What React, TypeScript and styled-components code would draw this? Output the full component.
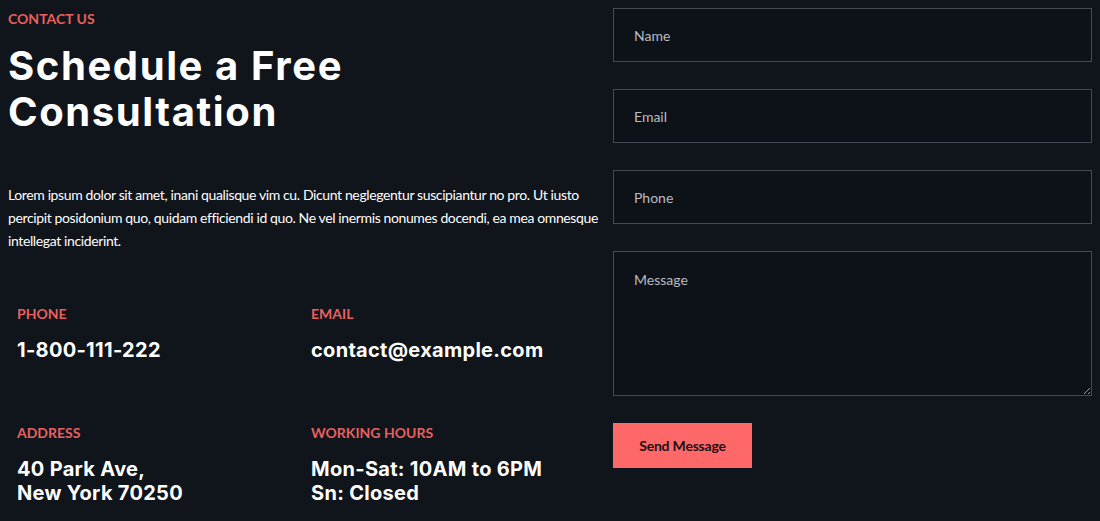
import React from "react";
import styled, { createGlobalStyle } from "styled-components";

const Global = createGlobalStyle`
  html, body { background: #10141b; }
  body { margin: 8px; font-family: Lato, "Open Sans", sans-serif; color: #ffffff; }
  * { box-sizing: border-box; }
`;

const Page = styled.div`
  display: grid;
  grid-template-columns: 595px 479px;
  column-gap: 10px;
  align-items: start;
`;

const Left = styled.section`
  display: flex;
  flex-direction: column;
`;

const Eyebrow = styled.div`
  font-family: Lato, sans-serif;
  font-weight: 700;
  font-size: 14px;
  line-height: 22px;
  color: #e8605f;
  text-transform: uppercase;
`;

const Heading = styled.h1`
  margin: 13px 0 0;
  font-family: Inter, "Open Sans", sans-serif;
  font-weight: 700;
  font-size: 40px;
  line-height: 46px;
  letter-spacing: 1.6px;
  color: #ffffff;
`;

const Lead = styled.p`
  margin: 48px 0 0;
  font-family: Lato, sans-serif;
  font-size: 14px;
  line-height: 23px;
  letter-spacing: -0.38px;
  color: #ffffff;
`;

const InfoGrid = styled.div`
  display: grid;
  grid-template-columns: 294px 294px;
  row-gap: 61px;
  padding-left: 9px;
  margin-top: 52px;
`;

const InfoItem = styled.div`
  display: flex;
  flex-direction: column;
  gap: 14px;
`;

const InfoLabel = styled.div`
  font-family: Lato, sans-serif;
  font-weight: 700;
  font-size: 14px;
  line-height: 20px;
  color: #e8605f;
  text-transform: uppercase;
`;

const InfoValue = styled.div`
  font-family: Inter, "Open Sans", sans-serif;
  font-weight: 700;
  font-size: 20px;
  line-height: 24px;
  letter-spacing: 0.3px;
  color: #ffffff;
`;

const Form = styled.form`
  display: flex;
  flex-direction: column;
  gap: 27px;
`;

const fieldBase = `
  width: 100%;
  background: #0d1118;
  border: 1px solid #454b55;
  color: #ffffff;
  font-family: Lato, sans-serif;
  font-size: 14px;
  padding: 0 20px;
  outline: none;
  &::placeholder { color: #b9bdc3; opacity: 1; }
`;

const Input = styled.input`
  ${fieldBase}
  height: 54px;
`;

const TextArea = styled.textarea`
  ${fieldBase}
  height: 145px;
  padding-top: 19px;
  line-height: 18px;
  resize: vertical;
  display: block;
`;

const SendButton = styled.button`
  align-self: flex-start;
  width: 139px;
  height: 45px;
  background: #ff6868;
  border: none;
  color: #1d1115;
  font-family: Lato, sans-serif;
  font-weight: 700;
  font-size: 14px;
  letter-spacing: -0.2px;
  cursor: pointer;
`;

const info = [
  { label: "Phone", value: ["1-800-111-222"] },
  { label: "Email", value: ["contact@example.com"] },
  { label: "Address", value: ["40 Park Ave,", "New York 70250"] },
  { label: "Working Hours", value: ["Mon-Sat: 10AM to 6PM", "Sn: Closed"] },
];

export default function App() {
  return (
    <>
      <Global />
      <Page>
        <Left>
          <Eyebrow>Contact Us</Eyebrow>
          <Heading>
            Schedule a Free
            <br />
            Consultation
          </Heading>
          <Lead>
            Lorem ipsum dolor sit amet, inani qualisque vim cu. Dicunt neglegentur suscipiantur no pro. Ut iusto
            percipit posidonium quo, quidam efficiendi id quo. Ne vel inermis nonumes docendi, ea mea omnesque
            intellegat inciderint.
          </Lead>
          <InfoGrid>
            {info.map((item) => (
              <InfoItem key={item.label}>
                <InfoLabel>{item.label}</InfoLabel>
                <InfoValue>
                  {item.value.map((line, i) => (
                    <div key={i}>{line}</div>
                  ))}
                </InfoValue>
              </InfoItem>
            ))}
          </InfoGrid>
        </Left>
        <Form onSubmit={(e) => e.preventDefault()}>
          <Input placeholder="Name" />
          <Input placeholder="Email" />
          <Input placeholder="Phone" />
          <TextArea placeholder="Message" />
          <SendButton type="submit">Send Message</SendButton>
        </Form>
      </Page>
    </>
  );
}
